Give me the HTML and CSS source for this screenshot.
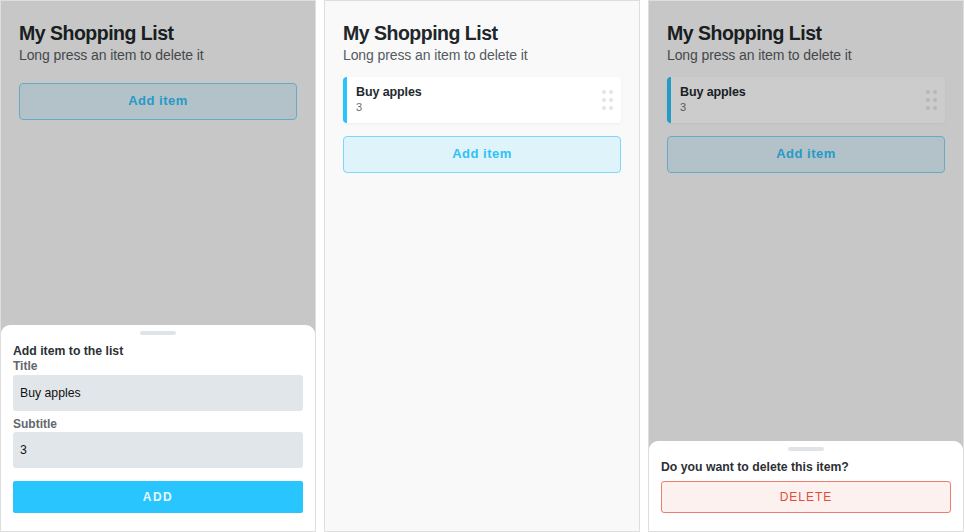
FILE: index.html
```html
<!DOCTYPE html>
<html>
<head>
<meta charset="utf-8">
<link rel="stylesheet" href="styles.css">
</head>
<body>
<div class="screens">
  <section class="panel">
    <h1 class="title">My Shopping List</h1>
    <p class="subtitle">Long press an item to delete it</p>
    <div class="list empty"></div>
    <button class="add-btn">Add item</button>
    <div class="overlay"></div>
    <div class="sheet">
      <div class="handle"></div>
      <div class="sheet-heading">Add item to the list</div>
      <label class="field-label first">Title</label>
      <div class="input">Buy apples</div>
      <label class="field-label">Subtitle</label>
      <div class="input tight">3</div>
      <button class="primary-btn">ADD</button>
    </div>
  </section>

  <section class="panel">
    <h1 class="title">My Shopping List</h1>
    <p class="subtitle">Long press an item to delete it</p>
    <div class="list">
      <div class="card">
        <div class="card-text">
          <div class="card-title">Buy apples</div>
          <div class="card-sub">3</div>
        </div>
        <div class="grip"><i></i><i></i><i></i><i></i><i></i><i></i></div>
      </div>
    </div>
    <button class="add-btn">Add item</button>
  </section>

  <section class="panel">
    <h1 class="title">My Shopping List</h1>
    <p class="subtitle">Long press an item to delete it</p>
    <div class="list">
      <div class="card">
        <div class="card-text">
          <div class="card-title">Buy apples</div>
          <div class="card-sub">3</div>
        </div>
        <div class="grip"><i></i><i></i><i></i><i></i><i></i><i></i></div>
      </div>
    </div>
    <button class="add-btn">Add item</button>
    <div class="overlay"></div>
    <div class="sheet delete-sheet">
      <div class="handle"></div>
      <div class="sheet-heading">Do you want to delete this item?</div>
      <button class="danger-btn">DELETE</button>
    </div>
  </section>
</div>
</body>
</html>
```

FILE: styles.css
```css
* { box-sizing: border-box; }

html, body {
  margin: 0;
  padding: 0;
  background: #ffffff;
  font-family: "Liberation Sans", Arial, sans-serif;
}

.screens {
  display: flex;
  gap: 8px;
  width: 964px;
  height: 532px;
  overflow: hidden;
}

.panel {
  position: relative;
  width: 316px;
  height: 532px;
  flex: none;
  background: #f9f9f9;
  border: 1px solid #dedede;
  padding: 21px 18px 0 18px;
  display: flex;
  flex-direction: column;
  overflow: hidden;
}

.title {
  margin: 0;
  font-size: 19.5px;
  line-height: 23px;
  letter-spacing: -0.5px;
  font-weight: 700;
  color: #20262a;
}

.subtitle {
  margin: 2px 0 0 0;
  font-size: 14px;
  line-height: 16px;
  letter-spacing: -0.1px;
  color: #555b5f;
}

.list {
  padding-top: 14px;
}

.card {
  display: flex;
  align-items: center;
  justify-content: space-between;
  height: 46px;
  background: #ffffff;
  border-left: 4px solid #29c4f9;
  border-radius: 4px;
  box-shadow: 0 1px 3px rgba(0, 0, 0, 0.05);
  padding: 0 8px 0 9px;
  margin-bottom: 7px;
}

.card-text {
  display: flex;
  flex-direction: column;
  padding-bottom: 2px;
}

.card-title {
  font-size: 12.5px;
  line-height: 15px;
  letter-spacing: -0.1px;
  font-weight: 700;
  color: #24292d;
}

.card-sub {
  font-size: 11px;
  line-height: 14px;
  color: #6b7075;
}

.grip {
  display: grid;
  grid-template-columns: 4px 4px;
  grid-auto-rows: 4px;
  column-gap: 3px;
  row-gap: 4px;
}

.grip i {
  display: block;
  width: 4px;
  height: 4px;
  border-radius: 50%;
  background: #e1e5e9;
}

.add-btn {
  margin-top: 6px;
  height: 37px;
  width: 100%;
  background: #dff3fb;
  border: 1px solid #7fd6f8;
  border-radius: 4px;
  color: #2ec2f8;
  font-family: "Liberation Sans", Arial, sans-serif;
  font-size: 13px;
  font-weight: 700;
  letter-spacing: 0.5px;
  padding: 0 0 2px 0;
}

.overlay {
  position: absolute;
  inset: 0;
  background: rgba(0, 0, 0, 0.2);
}

.sheet {
  position: absolute;
  left: 0;
  right: 0;
  bottom: 0;
  background: #ffffff;
  border-radius: 9px 9px 0 0;
  padding: 6px 12px 18px 12px;
  display: flex;
  flex-direction: column;
}

.handle {
  align-self: center;
  width: 36px;
  height: 4px;
  border-radius: 2px;
  background: #e0e4e8;
  margin-bottom: 9px;
}

.sheet-heading {
  font-size: 12.25px;
  line-height: 15px;
  font-weight: 700;
  color: #2b3034;
}

.field-label {
  font-size: 12px;
  line-height: 14px;
  font-weight: 700;
  color: #62686c;
  margin-top: 6px;
}

.field-label.first {
  margin-top: 0;
}

.input {
  margin-top: 2px;
  height: 36px;
  background: #e1e6ea;
  border-radius: 3px;
  padding: 0 7px;
  display: flex;
  align-items: center;
  font-size: 12.25px;
  color: #111;
}

.input.tight {
  margin-top: 1px;
}

.primary-btn {
  margin-top: 13px;
  height: 32px;
  width: 100%;
  border: none;
  border-radius: 2px;
  background: #28c5fe;
  color: #eaf8ff;
  font-family: "Liberation Sans", Arial, sans-serif;
  font-size: 12px;
  font-weight: 700;
  letter-spacing: 1.5px;
  padding: 0;
}

.delete-sheet .sheet-heading {
  margin-bottom: 6px;
}

.danger-btn {
  height: 32px;
  width: 100%;
  border: 1px solid #ea7d70;
  border-radius: 3px;
  background: #fdf1ef;
  color: #e44c36;
  font-family: "Liberation Sans", Arial, sans-serif;
  font-size: 12px;
  font-weight: 400;
  letter-spacing: 1px;
  padding: 0;
}
```
